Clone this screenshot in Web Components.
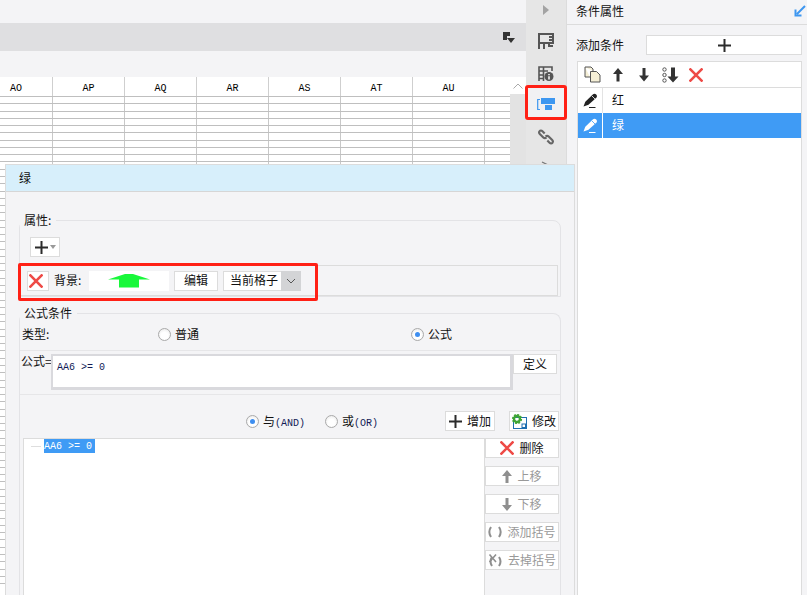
<!DOCTYPE html>
<html>
<head>
<meta charset="utf-8">
<style>
html, body { margin: 0; padding: 0; }
body { width: 807px; height: 595px; overflow: hidden; position: relative; background: #f4f4f6;
  font: 12px "Noto Sans CJK SC", "Liberation Sans", sans-serif; color: #111; }
#layout { display: flex; width: 807px; height: 595px; }
</style>
</head>
<body>
<div id="layout">
  <fx-sheet></fx-sheet>
  <fx-rail></fx-rail>
  <fx-props></fx-props>
</div>
<fx-dialog></fx-dialog>

<script>
const ICONS = {
  x: '<svg width="14" height="14" viewBox="2 2 14 14"><path d="M2.5 2.5L15.5 15.5M15.5 2.5L2.5 15.5" stroke="#ee4a46" stroke-width="2.6" fill="none"/></svg>',
  plus: '<svg width="13" height="13" viewBox="0 0 13 13"><path d="M6.500 0V13M0 6.500H13" stroke="#2b2b2b" stroke-width="2" fill="none"/></svg>',
  up: '<svg width="10" height="15" viewBox="0 0 10 15"><path d="M5 1L10 7H6.500V14H3.500V7H0Z" fill="#8f8f8f"/></svg>',
  down: '<svg width="10" height="15" viewBox="0 0 10 15"><path d="M5 14L10 8H6.500V1H3.500V8H0Z" fill="#8f8f8f"/></svg>',
  parens: '<svg width="14" height="12" viewBox="0 0 14 12"><path d="M3 1C1 4 1 8 3 11M11 1C13 4 13 8 11 11" stroke="#8f8f8f" stroke-width="2" fill="none"/></svg>',
  noparens: '<svg width="15" height="15" viewBox="0 0 15 15"><path d="M4 4C2 7 2 10 4 13M11 4C13 7 13 10 11 13" stroke="#8f8f8f" stroke-width="2" fill="none"/><path d="M1.500 1.500L8 9M8 1.500L1.500 9" stroke="#8f8f8f" stroke-width="1.600" fill="none"/></svg>',
  gear: '<svg width="15" height="15" viewBox="0 0 15 15"><rect x="1.500" y="3.500" width="13" height="11" fill="#fff" stroke="#1f6fb0"/><rect x="10" y="10" width="3.500" height="3.500" fill="#fff" stroke="#1f6fb0"/><circle cx="5" cy="5" r="3" fill="none" stroke="#3fa535" stroke-width="2.400"/><circle cx="5" cy="5" r="4.400" fill="none" stroke="#3fa535" stroke-width="1.400" stroke-dasharray="2 1.400"/></svg>',
  pen: (c, bg) => `<svg width="15" height="15" viewBox="0 0 15 15"><path d="M.5 13.500L2.300 8.700L9.800 1.500C10.800 .6 12.200 .6 13.200 1.500C14.200 2.500 14.200 3.800 13.300 4.800L5.500 11.800Z" fill="${c}"/><path d="M9 3L12 6" stroke="${bg}" stroke-width=".8"/><path d="M6 14.500H12.500" stroke="${c}" stroke-width="1"/></svg>`
};

// one sheet with the column headers and the empty rows
const sheetTpl = document.createElement('template');
sheetTpl.innerHTML = `<style>
:host { display: flex; flex-direction: column; width: 526px; height: 595px; flex: none; background: #f4f4f6; }
.band { height: 28px; margin-top: 23px; background: #dfdfe1; display: flex; justify-content: flex-end; align-items: center; }
.band svg { margin-right: 11px; }
.body { margin-top: 26px; display: flex; flex: 1; min-height: 0; }
.grid { width: 510px; background: #fff; overflow: hidden; }
.head { display: flex; height: 19px; border-bottom: 1px solid #bfbfbf; }
.head span { flex: none; width: 71px; border-right: 1px solid #cfcfcf; text-align: center; font: 10px/23px "Liberation Mono", monospace; color: #000; }
.head span:first-child { width: 52px; text-align: left; text-indent: 10px; }
.head span:last-child { width: 25px; border: 0; }
.row { display: flex; border-bottom: 1px solid #bfbfbf; box-sizing: border-box; }
.row i { flex: none; width: 71px; border-right: 1px solid #c8c8c8; }
.row i:first-child { width: 52px; }
.scroll { width: 16px; background: #e3e3e3; }
.scroll div { height: 17px; background: #fff; display: flex; justify-content: center; align-items: center; }
</style>
<div class="band"><svg width="12" height="11" viewBox="0 0 12 11"><path d="M0 0H7V4H4V8H0Z" fill="#333"/><path d="M4 6H12L8 11Z" fill="#333"/></svg></div>
<div class="body">
  <div class="grid"><div class="head"></div><div class="rows"></div></div>
  <div class="scroll"><div><svg width="10" height="6" viewBox="0 0 10 6"><path d="M.5 5.500L5 1L9.500 5.500" stroke="#aaa" fill="none"/></svg></div></div>
</div>`;
class FxSheet extends HTMLElement {
  constructor() {
    super();
    const root = this.attachShadow({ mode: 'open' });
    root.appendChild(sheetTpl.content.cloneNode(true));
    const head = root.querySelector('.head');
    head.innerHTML = ['AO','AP','AQ','AR','AS','AT','AU',''].map(t => `<span>${t}</span>`).join('');
    let html = '', prev = 0;
    for (let i = 1; i < 68; i++) {
      const y = Math.round(i * 7.27);
      html += `<div class="row" style="height:${y - prev}px">${'<i></i>'.repeat(7)}</div>`;
      prev = y;
    }
    root.querySelector('.rows').innerHTML = html;
  }
}
customElements.define('fx-sheet', FxSheet);

// icon strip between sheet and panel
const railTpl = document.createElement('template');
railTpl.innerHTML = `<style>
:host { display: flex; flex-direction: column; align-items: center; width: 40px; height: 595px; flex: none; background: #e6e6e6; padding-top: 5px; box-sizing: border-box; position: relative; }
svg { display: block; flex: none; }
.hl { position: absolute; left: -1px; top: 85px; width: 42px; height: 35px; box-sizing: border-box; border: 3px solid #ff2015; border-radius: 3px; background: #f1f1f3; display: flex; align-items: center; justify-content: center; }
.hl svg { margin-top: 3px; }
</style>
<svg width="6" height="10" viewBox="0 0 6 10"><path d="M0 0L6 5L0 10Z" fill="#a3a3a3"/></svg>
<svg style="margin-top:18px" width="16" height="16" viewBox="0 0 16 16"><path d="M1 1H15V10H1ZM1 10V16M6 10V16M11 10V13H15M11 7H15M11 4H15" fill="none" stroke="#555" stroke-width="2"/></svg>
<svg style="margin-top:17px" width="16" height="15" viewBox="0 0 16 15"><path d="M1 15V1H14V5M1 5H10M1 9H6M1 12.500H6M5.500 1V15" fill="none" stroke="#555" stroke-width="1.600"/><circle cx="11" cy="10.500" r="4.500" fill="#555"/><path d="M11 8V9.200M11 10.200V13.500" stroke="#fff" stroke-width="1.500"/></svg>
<div class="hl"><svg width="19" height="13" viewBox="0 0 19 13"><path d="M3 1.500H.7V11.500H3" fill="none" stroke="#3e97f0" stroke-width="1.200"/><rect x="4" y="0" width="14" height="6" fill="#3e97f0"/><rect x="8" y="7" width="7" height="5" fill="#3e97f0"/></svg></div>
<svg style="margin-top:48px" width="16" height="16" viewBox="0 0 18 18"><path d="M7.500 5L5 2.500C4 1.500 2.500 1.500 1.800 2.500C1 3.500 1 4.500 2 5.500L6 9.500C7 10.500 8.500 10.500 9.500 9.500M10.500 13L13 15.500C14 16.500 15.500 16.500 16.200 15.500C17 14.500 17 13.500 16 12.500L12 8.500C11 7.500 9.500 7.500 8.500 8.500" fill="none" stroke="#666" stroke-width="2.400"/></svg>
<svg style="margin-top:16px" width="10" height="10" viewBox="0 0 10 10"><path d="M1 1L9 5L1 9" fill="none" stroke="#777" stroke-width="1.300"/></svg>`;
class FxRail extends HTMLElement {
  constructor() { super(); this.attachShadow({ mode: 'open' }).appendChild(railTpl.content.cloneNode(true)); }
}
customElements.define('fx-rail', FxRail);

// right hand panel with the list of conditions
const propsTpl = document.createElement('template');
propsTpl.innerHTML = `<style>
:host { display: flex; flex-direction: column; flex: 1; height: 595px; background: #f4f4f6; border-left: 1px solid #dcdcdc; box-sizing: border-box; font-size: 12px; }
.title { height: 25px; box-sizing: border-box; border-bottom: 1px solid #dcdcdc; display: flex; align-items: center; justify-content: space-between; padding: 0 1px 3px 9px; }
.add { display: flex; align-items: center; height: 20px; margin: 10px 5px 0 9px; justify-content: space-between; }
.add span { padding-bottom: 2px; }
.add b { width: 156px; height: 20px; box-sizing: border-box; background: #fff; border: 1px solid #dcdcdc; display: flex; align-items: center; justify-content: center; }
.list { margin: 6px 5px 0 10px; flex: 1; background: #fff; border: 1px solid #dcdcdc; border-bottom: 0; }
.tools { height: 25px; border-bottom: 1px solid #dcdcdc; display: flex; align-items: center; padding-left: 6px; }
.tools svg { display: block; flex: none; }
.item { display: flex; height: 25px; align-items: center; }
.item .ic { width: 24px; height: 100%; display: flex; align-items: center; justify-content: center; border-right: 1px solid #e3e3e3; }
.item .tx { padding: 0 0 2px 9px; }
.item.on { background: #3f9bf5; color: #fff; }
.item.on .ic { border-right-color: #fff; }
</style>
<div class="title"><span>条件属性</span><svg width="12" height="12" viewBox="0 0 12 12"><path d="M11 1L3 9M1.500 4.500V10.500H7.500" fill="none" stroke="#3e97f0" stroke-width="2"/></svg></div>
<div class="add"><span>添加条件</span><b>${ICONS.plus}</b></div>
<div class="list">
  <div class="tools">
    <svg width="17" height="17" viewBox="0 0 17 17"><path d="M1 1H7L9 3V5M1 1V11H6" fill="#f5efd6" stroke="#555"/><path d="M6.500 5.500H12.500L16 9V16H6.500Z" fill="#f5efd6" stroke="#555"/></svg>
    <svg style="margin-left:11px" width="12" height="15" viewBox="0 0 12 15"><path d="M6 1L11 7H7.500V14.500H4.500V7H1Z" fill="#333"/></svg>
    <svg style="margin-left:14px" width="12" height="15" viewBox="0 0 12 15"><path d="M6 14.500L11 8.500H7.500V1H4.500V8.500H1Z" fill="#333"/></svg>
    <svg style="margin-left:12px" width="17" height="16" viewBox="0 0 17 16"><circle cx="2.500" cy="2.500" r="1.700" fill="none" stroke="#555"/><circle cx="2.500" cy="8" r="1.700" fill="none" stroke="#555"/><circle cx="2.500" cy="13.500" r="1.700" fill="none" stroke="#555"/><path d="M11 15.500L16.500 9.500H13V.5H9V9.500H5.500Z" fill="#333"/></svg>
    <span style="margin-left:10px;display:flex">${ICONS.x}</span>
  </div>
  <div class="item"><span class="ic">${ICONS.pen('#222', '#fff')}</span><span class="tx">红</span></div>
  <div class="item on"><span class="ic">${ICONS.pen('#fff', '#3f9bf5')}</span><span class="tx">绿</span></div>
</div>`;
class FxProps extends HTMLElement {
  constructor() { super(); this.attachShadow({ mode: 'open' }).appendChild(propsTpl.content.cloneNode(true)); }
}
customElements.define('fx-props', FxProps);

// small white button, slot takes the label
const btnTpl = document.createElement('template');
btnTpl.innerHTML = `<style>
:host { display: inline-flex; align-items: center; justify-content: center; gap: 5px; box-sizing: border-box; height: 20px; background: #fff; border: 1px solid #dcdcdc; font-size: 12px; color: #111; white-space: nowrap; flex: none; }
:host([disabled]) { color: #999; }
svg { display: block; }
#ic { display: flex; }
#tx { padding-bottom: 2px; }
</style><span id="ic"></span><span id="tx"><slot></slot></span>`;
class FxBtn extends HTMLElement {
  constructor() {
    super();
    const root = this.attachShadow({ mode: 'open' });
    root.appendChild(btnTpl.content.cloneNode(true));
  }
  connectedCallback() {
    const name = this.getAttribute('icon');
    const ic = this.shadowRoot.getElementById('ic');
    if (name) ic.innerHTML = ICONS[name]; else ic.remove();
  }
}
customElements.define('fx-btn', FxBtn);

const radioTpl = document.createElement('template');
radioTpl.innerHTML = `<style>
:host { display: inline-flex; align-items: center; gap: 4px; font-size: 12px; white-space: nowrap; }
.o { width: 13px; height: 13px; border-radius: 50%; box-sizing: border-box; border: 1px solid #aaa; background: radial-gradient(circle at 50% 60%, #fff 40%, #e4e4e4); display: flex; align-items: center; justify-content: center; }
:host([checked]) .o::after { content: ""; width: 5px; height: 5px; border-radius: 50%; background: #3e8ef0; }
.t { padding-bottom: 2px; }
</style><span class="o"></span><span class="t"><slot></slot></span>`;
class FxRadio extends HTMLElement {
  constructor() { super(); this.attachShadow({ mode: 'open' }).appendChild(radioTpl.content.cloneNode(true)); }
}
customElements.define('fx-radio', FxRadio);

// rounded group with the caption sitting on its top edge
const groupTpl = document.createElement('template');
groupTpl.innerHTML = `<style>
:host { display: block; position: relative; box-sizing: border-box; border: 1px solid #e3e3e6; border-radius: 8px 8px 0 0; margin: 0 13px; }
.cap { position: absolute; left: 0; top: -10px; background: #f4f4f6; padding: 0 5px 0 4px; font-size: 12px; line-height: 17px; }
</style><span class="cap"></span><slot></slot>`;
class FxGroup extends HTMLElement {
  constructor() {
    super();
    const root = this.attachShadow({ mode: 'open' });
    root.appendChild(groupTpl.content.cloneNode(true));
    root.querySelector('.cap').textContent = this.getAttribute('caption');
  }
}
customElements.define('fx-group', FxGroup);

// the floating window
const dlgTpl = document.createElement('template');
dlgTpl.innerHTML = `<style>
:host { display: flex; flex-direction: column; position: absolute; left: 5px; top: 164px; width: 570px; height: 431px; background: #f4f4f6; border: 1px solid #dcdcdc; border-bottom: 0; box-sizing: border-box; font-size: 12px; }
.head { height: 27px; flex: none; box-sizing: border-box; background: #d7effb; border-bottom: 1px solid #d6d6d6; padding-left: 13px; line-height: 26px; }
fx-group.a { margin-top: 28px; height: 77px; flex: none; }
fx-group.b { margin-top: 16px; flex: 1; min-height: 0; display: flex; flex-direction: column; border-bottom: 0; }
.plus { margin: 16px 0 8px 10px; width: 30px; height: 20px; background: #fff; border: 1px solid #dcdcdc; box-sizing: border-box; display: flex; align-items: center; justify-content: center; gap: 2px; }
.hl { position: relative; display: flex; align-items: center; height: 31px; margin: 0 2px 0 0; border: 1px solid #dcdcdc; box-sizing: border-box; padding-left: 6px; }
.redbox { position: absolute; left: -3px; top: -3px; width: 300px; height: 38px; border: 3px solid #ff2015; border-radius: 2px; box-sizing: border-box; pointer-events: none; }
.del { width: 22px; }
.bglabel { width: 30px; margin: 0 5px; padding-bottom: 2px; white-space: nowrap; }
.swatch { width: 80px; height: 20px; background: #fff; margin-right: 5px; display: flex; align-items: center; justify-content: center; flex: none; }
.sel { display: flex; height: 20px; width: 78px; margin-left: 5px; background: #fff; border: 1px solid #dcdcdc; border-right: 0; box-sizing: border-box; align-items: center; flex: none; padding: 0 0 2px 6px; position: relative; white-space: nowrap; }
.sel b { position: absolute; right: 0; top: -1px; width: 20px; height: 20px; background: #d3d4d6; display: flex; align-items: center; justify-content: center; }
.type { display: flex; align-items: center; height: 20px; margin-top: 10px; padding-left: 2px; border-bottom: 1px solid #e6e6e8; padding-bottom: 6px; }
.type .lb { width: 136px; padding-bottom: 2px; }
.type fx-radio + fx-radio { margin-left: 212px; }
.formula { display: flex; align-items: flex-start; padding: 3px 0 4px 1px; border-bottom: 1px solid #e6e6e8; height: 36px; }
.formula .lb { width: 30px; line-height: 16px; margin-top: -1px; white-space: nowrap; }
.area { width: 462px; height: 36px; background: #fff; box-sizing: border-box; border: solid #d9d9dd; border-width: 2px 3px 3px 2px; padding: 1px 0 0 4px; flex: none; line-height: 16px; }
code { font: 10px "Liberation Mono", monospace; color: #111a55; white-space: pre; }
.ops { display: flex; align-items: center; height: 20px; margin-top: 16px; padding: 0 1px 0 226px; }
.ops fx-radio + fx-radio { margin-left: 20px; }
.ops .sp { flex: 1; }
.ops fx-btn { width: 50px; }
.ops fx-btn + fx-btn { margin-left: 14px; }
.work { display: flex; margin: 7px 0 0 3px; flex: 1; min-height: 0; }
.list { width: 462px; background: #fff; border: 1px solid #dcdcdc; border-bottom: 0; box-sizing: border-box; padding-left: 7px; flex: none; display: flex; align-items: flex-start; }
.list i { width: 10px; height: 1px; background: #dedede; margin: 7px 3px 0 0; flex: none; }
.list code { display: block; background: #3f9bf5; color: #fff; height: 14px; line-height: 15px; padding: 0 3px 0 0; }
.side { display: flex; flex-direction: column; gap: 8px; }
.side fx-btn { width: 74px; }
</style>
<div class="head">绿</div>
<fx-group class="a" caption="属性:">
  <div class="plus">${ICONS.plus}<svg width="6" height="4" viewBox="0 0 6 4"><path d="M0 0H6L3 4Z" fill="#999"/></svg></div>
  <div class="hl">
    <fx-btn class="del" icon="x"></fx-btn>
    <span class="bglabel">背景:</span>
    <span class="swatch"><svg width="42" height="14" viewBox="0 0 42 14"><path d="M0 5.500L17 0H25L42 5.500H31V13.500H11V5.500Z" fill="#18f83a"/></svg></span>
    <fx-btn style="width:44px">编辑</fx-btn>
    <span class="sel">当前格子<b><svg width="10" height="6" viewBox="0 0 10 6"><path d="M1 1L5 5L9 1" fill="none" stroke="#555"/></svg></b></span>
    <span class="redbox"></span>
  </div>
</fx-group>
<fx-group class="b" caption="公式条件">
  <div class="type"><span class="lb">类型:</span><fx-radio>普通</fx-radio><fx-radio checked>公式</fx-radio></div>
  <div class="formula"><span class="lb">公式=</span><div class="area"><code>AA6 &gt;= 0</code></div><fx-btn style="width:44px">定义</fx-btn></div>
  <div class="ops"><fx-radio checked>与<code>(AND)</code></fx-radio><fx-radio>或<code>(OR)</code></fx-radio><span class="sp"></span><fx-btn icon="plus">增加</fx-btn><fx-btn icon="gear">修改</fx-btn></div>
  <div class="work">
    <div class="list"><i></i><code>AA6 &gt;= 0</code></div>
    <div class="side">
      <fx-btn icon="x">删除</fx-btn>
      <fx-btn icon="up" disabled>上移</fx-btn>
      <fx-btn icon="down" disabled>下移</fx-btn>
      <fx-btn icon="parens" disabled>添加括号</fx-btn>
      <fx-btn icon="noparens" disabled>去掉括号</fx-btn>
    </div>
  </div>
</fx-group>`;
class FxDialog extends HTMLElement {
  constructor() { super(); this.attachShadow({ mode: 'open' }).appendChild(dlgTpl.content.cloneNode(true)); }
}
customElements.define('fx-dialog', FxDialog);
</script>
</body>
</html>
